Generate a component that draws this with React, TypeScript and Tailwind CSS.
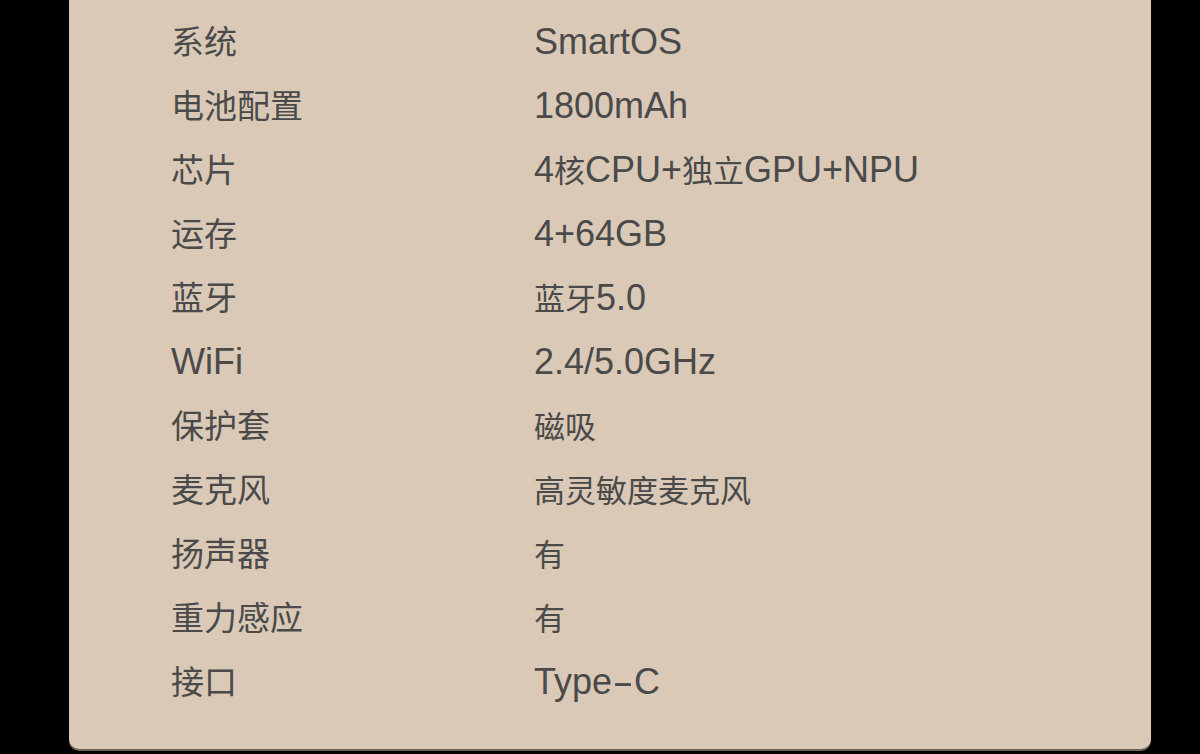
import React from "react";

const specs: [string, string][] = [
  ["系统", "SmartOS"],
  ["电池配置", "1800mAh"],
  ["芯片", "4核CPU+独立GPU+NPU"],
  ["运存", "4+64GB"],
  ["蓝牙", "蓝牙5.0"],
  ["WiFi", "2.4/5.0GHz"],
  ["保护套", "磁吸"],
  ["麦克风", "高灵敏度麦克风"],
  ["扬声器", "有"],
  ["重力感应", "有"],
  ["接口", "Type-C"],
];

// CJK glyphs run a bit narrower than the latin text in the source, so size runs separately
function Mixed({ text, cjk }: { text: string; cjk: string }) {
  const parts = text.match(/[\u4e00-\u9fff]+|-|[^\u4e00-\u9fff-]+/g) || [];
  return (
    <>
      {parts.map((p, i) =>
        /[\u4e00-\u9fff]/.test(p) ? (
          <span key={i} className={cjk}>{p}</span>
        ) : p === "-" ? (
          <span key={i} className="inline-block mx-[5px] scale-x-[1.8]">{p}</span>
        ) : (
          <span key={i}>{p}</span>
        )
      )}
    </>
  );
}

export default function App() {
  return (
    <div className="bg-black w-[1200px] h-[754px] overflow-hidden">
      <div className="ml-[69px] w-[1082px] h-[749px] bg-[#d9c9b6] rounded-b-[10px] shadow-[0_2px_0_#6e6253] pt-[10px] font-['Liberation_Sans','Noto_Sans_CJK_SC',sans-serif] text-[#4a4a4a]">
        {specs.map(([k, v]) => (
          <div key={k} className="flex items-center h-16 text-[36px] leading-none">
            <span className="ml-[102px] w-[363px]">
              <Mixed text={k} cjk="text-[33px]" />
            </span>
            <span>
              <Mixed text={v} cjk="text-[31px]" />
            </span>
          </div>
        ))}
      </div>
    </div>
  );
}
